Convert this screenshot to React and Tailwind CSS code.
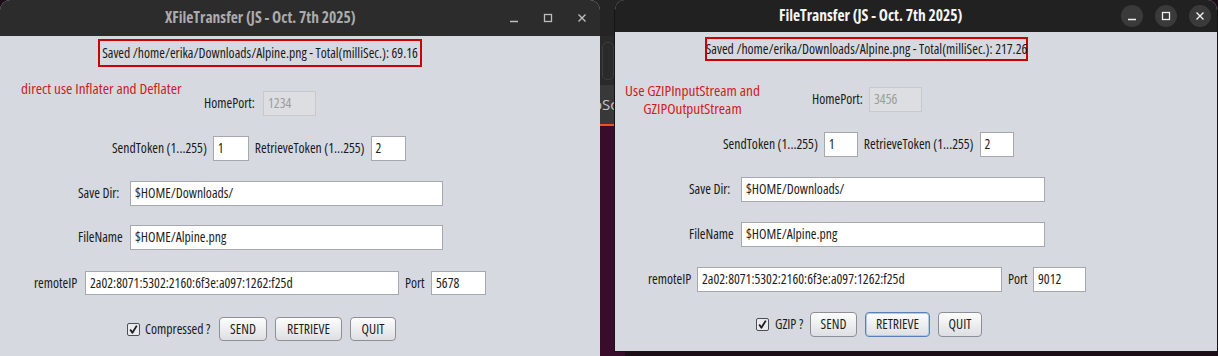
import React from "react";

function Input({ w, h = "h-[25px]", value, disabled }) {
  return (
    <div
      className={`${w} ${h} flex items-center pl-[4px] border ${
        disabled
          ? "bg-[#dcdee2] border-[#c6c9ce] text-[#9c9c9c]"
          : "bg-white border-[#a5a9af] text-[#1d1d1d]"
      }`}
    >
      {value}
    </div>
  );
}

function Btn({ w, label, focused }) {
  return (
    <div
      className={`${w} h-full flex items-center justify-center rounded-[4px] border bg-gradient-to-b from-[#fdfdfd] to-[#dedfe3] text-[#1d1d1d] ${
        focused
          ? "border-[#5a80b6] ring-1 ring-inset ring-[#b3c8e4]"
          : "border-[#8c8f95]"
      }`}
    >
      {label}
    </div>
  );
}

function Check() {
  return (
    <div className="w-[13px] h-[13px] rounded-[2px] border border-[#4b5058] bg-[#e9ebef] flex items-center justify-center">
      <svg width="11" height="11" viewBox="0 0 11 11">
        <path d="M2.2 5.6 L4.4 8.8 L8.8 1.6" fill="none" stroke="#1d1d1d" strokeWidth="1.8" strokeLinejoin="round" />
      </svg>
    </div>
  );
}

function Min({ color }) {
  return (
    <svg width="10" height="10" viewBox="0 0 10 10">
      <path d="M1 8.5 H9" stroke={color} strokeWidth="1.3" />
    </svg>
  );
}
function Max({ color }) {
  return (
    <svg width="10" height="10" viewBox="0 0 10 10">
      <rect x="1.5" y="1.5" width="7" height="7" fill="none" stroke={color} strokeWidth="1.3" />
    </svg>
  );
}
function Close({ color }) {
  return (
    <svg width="10" height="10" viewBox="0 0 10 10">
      <path d="M1.5 1.5 L8.5 8.5 M8.5 1.5 L1.5 8.5" stroke={color} strokeWidth="1.4" />
    </svg>
  );
}

const body = "font-['Open_Sans',sans-serif] font-stretch-condensed text-[13.7px] text-[#1a1a1a]";
const title = "font-['Open_Sans',sans-serif] font-bold font-stretch-semi-condensed text-[15.5px] whitespace-nowrap";
const red = "leading-[18px] text-[#d01c1c] text-[15.3px] whitespace-nowrap";

export default function App() {
  return (
    <div className="relative w-[1218px] h-[356px] overflow-hidden bg-[#1c0e17]">
      {/* background app strip visible between windows */}
      <div className="absolute left-[585px] top-0 w-[40px] h-[356px] flex flex-col">
        <div className="h-[36px] bg-[#242424]" />
        <div className="h-[49px] bg-[#2a2a2a] flex items-center pl-[17px]">
          <div className="w-[12px] h-[38px] rounded-[5px] border border-[#3d3d3d]" />
        </div>
        <div className="h-[39px] bg-[#383838] flex items-center pl-[8px] font-['Open_Sans',sans-serif] text-[15px] text-[#c8c8c8]">
          oSc
        </div>
        <div className="h-[2px] bg-[#e95420]" />
        <div className="flex-1 bg-[#380c2a]" />
      </div>

      {/* Left window (inactive) */}
      <div className="absolute left-0 top-0 w-[600px] h-[370px] flex flex-col rounded-t-[10px] overflow-hidden bg-[#d6d9e0]">
        <div className="h-[36px] bg-[#2c2c2c] flex items-center shrink-0">
          <div className={`${title} text-[#ababab] pl-[165px] w-[497px]`}>XFileTransfer (JS - Oct. 7th 2025)</div>
          <div className="flex items-center">
            <div className="w-[34px] flex justify-center"><Min color="#bdbdbd" /></div>
            <div className="w-[34px] flex justify-center"><Max color="#bdbdbd" /></div>
            <div className="w-[34px] flex justify-center"><Close color="#bdbdbd" /></div>
          </div>
        </div>
        <div className={`${body} flex flex-col`}>
          <div className="mt-[3px] ml-[98px] w-[324px] h-[28px] border-2 border-[#cc0000] flex items-center justify-center whitespace-nowrap">
            Saved /home/erika/Downloads/Alpine.png - Total(milliSec.): 69.16
          </div>
          <div className="mt-[12px] h-[37px] flex">
            <div className={`pl-[21px] w-[183px] ${red}`}>direct use Inflater and Deflater</div>
            <div className="ml-[21px] mt-[12px] flex items-center gap-[7px]">
              <span className="w-[52px]">HomePort:</span>
              <Input w="w-[53px]" value="1234" disabled />
            </div>
          </div>
          <div className="mt-[20px] h-[25px] flex items-center pl-[112px] gap-[6px] whitespace-nowrap">
            <span>SendToken (1...255)</span>
            <Input w="w-[36px]" value="1" />
            <span>RetrieveToken (1...255)</span>
            <Input w="w-[35px]" value="2" />
          </div>
          <div className="mt-[20px] h-[25px] flex items-center pl-[78px]">
            <span className="w-[52px]">Save Dir:</span>
            <Input w="w-[313px]" value="$HOME/Downloads/" />
          </div>
          <div className="mt-[19px] h-[25px] flex items-center pl-[78px]">
            <span className="w-[52px]">FileName</span>
            <Input w="w-[313px]" value="$HOME/Alpine.png" />
          </div>
          <div className="mt-[21px] h-[24px] flex items-center pl-[34px]">
            <span className="w-[51px]">remoteIP</span>
            <Input w="w-[314px]" h="h-[24px]" value="2a02:8071:5302:2160:6f3e:a097:1262:f25d" />
            <span className="ml-[6px] w-[26px]">Port</span>
            <Input w="w-[55px]" h="h-[24px]" value="5678" />
          </div>
          <div className="mt-[22px] h-[24px] flex items-center pl-[127px]">
            <Check />
            <span className="ml-[5px] w-[70px] whitespace-nowrap">Compressed ?</span>
            <div className="ml-[4px] flex h-full gap-[8px]">
              <Btn w="w-[48px]" label="SEND" />
              <Btn w="w-[67px]" label="RETRIEVE" />
              <Btn w="w-[46px]" label="QUIT" />
            </div>
          </div>
        </div>
      </div>

      {/* Right window (active) */}
      <div className="absolute left-[614px] top-0 w-[604px] h-[352px] flex flex-col rounded-t-[10px] overflow-hidden border-l border-r border-b border-[#141414] bg-[#d6d9e0]">
        <div className="h-[32px] bg-[#212121] flex items-center shrink-0">
          <div className={`${title} text-[#f4f4f4] pl-[164px] w-[505px]`}>FileTransfer (JS - Oct. 7th 2025)</div>
          <div className="flex items-center gap-[12px] ml-[1px]">
            <div className="w-[22px] h-[22px] rounded-full bg-[#3a3a3a] flex items-center justify-center"><Min color="#f0f0f0" /></div>
            <div className="w-[22px] h-[22px] rounded-full bg-[#3a3a3a] flex items-center justify-center"><Max color="#f0f0f0" /></div>
            <div className="w-[22px] h-[22px] rounded-full bg-[#3a3a3a] flex items-center justify-center"><Close color="#f0f0f0" /></div>
          </div>
        </div>
        <div className={`${body} flex flex-col`}>
          <div className="mt-[5px] ml-[90px] w-[323px] h-[24px] border-2 border-[#cc0000] flex items-center justify-center whitespace-nowrap">
            Saved /home/erika/Downloads/Alpine.png - Total(milliSec.): 217.26
          </div>
          <div className="mt-[20px] h-[36px] flex">
            <div className={`ml-[11px] w-[133px] flex flex-col items-center ${red}`}>
              <div>Use GZIPInputStream and</div>
              <div>GZIPOutputStream</div>
            </div>
            <div className="ml-[53px] mt-[6px] h-[25px] flex items-center gap-[7px]">
              <span className="w-[50px]">HomePort:</span>
              <Input w="w-[53px]" value="3456" disabled />
            </div>
          </div>
          <div className="mt-[15px] h-[25px] flex items-center pl-[108px] gap-[6px] whitespace-nowrap">
            <span>SendToken (1...255)</span>
            <Input w="w-[34px]" value="1" />
            <span>RetrieveToken (1...255)</span>
            <Input w="w-[34px]" value="2" />
          </div>
          <div className="mt-[20px] h-[25px] flex items-center pl-[74px]">
            <span className="w-[52px]">Save Dir:</span>
            <Input w="w-[304px]" value="$HOME/Downloads/" />
          </div>
          <div className="mt-[20px] h-[25px] flex items-center pl-[74px]">
            <span className="w-[52px]">FileName</span>
            <Input w="w-[304px]" value="$HOME/Alpine.png" />
          </div>
          <div className="mt-[20px] h-[25px] flex items-center pl-[33px]">
            <span className="w-[49px]">remoteIP</span>
            <Input w="w-[305px]" value="2a02:8071:5302:2160:6f3e:a097:1262:f25d" />
            <span className="ml-[6px] w-[25px]">Port</span>
            <Input w="w-[53px]" value="9012" />
          </div>
          <div className="mt-[20px] h-[25px] flex items-center pl-[141px]">
            <Check />
            <span className="ml-[6px] w-[35px] whitespace-nowrap">GZIP ?</span>
            <div className="flex h-full gap-[8px]">
              <Btn w="w-[47px]" label="SEND" />
              <Btn w="w-[65px]" label="RETRIEVE" focused />
              <Btn w="w-[44px]" label="QUIT" />
            </div>
          </div>
        </div>
      </div>
    </div>
  );
}
